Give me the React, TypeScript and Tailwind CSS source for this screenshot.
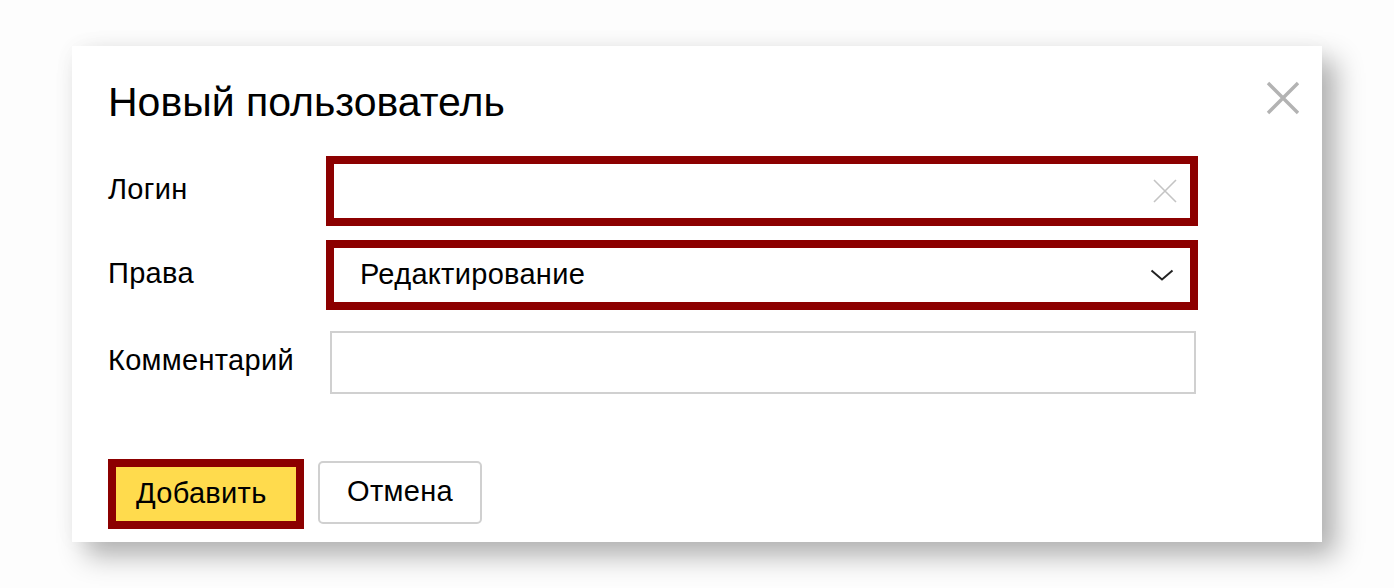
const font = { fontFamily: '"Liberation Sans", Arial, sans-serif' }

const CloseIcon = () => (
  <svg width="34" height="34" viewBox="0 0 34 34" className="text-[#b3b3b3]">
    <path d="M2 2L32 32M32 2L2 32" stroke="currentColor" strokeWidth="3.4" />
  </svg>
)

const ClearIcon = () => (
  <svg width="24" height="24" viewBox="0 0 24 24" className="text-[#c4c4c4]">
    <path d="M1 1L23 23M23 1L1 23" stroke="currentColor" strokeWidth="1.6" />
  </svg>
)

const Chevron = () => (
  <svg width="24" height="13" viewBox="0 0 24 13" className="text-[#222]">
    <path d="M1.5 1.5L12 10.5L22.5 1.5" stroke="currentColor" strokeWidth="2" fill="none" />
  </svg>
)

const Row = ({ label, children }: { label: string; children: React.ReactNode }) => (
  <div className="flex items-center">
    <div className="w-[218px] pb-[5px] text-[29px] tracking-[0.3px] leading-[32px] text-black">{label}</div>
    {children}
  </div>
)

export default function App() {
  return (
    <div className="w-[1394px] h-[588px] bg-[#fdfdfd] pt-[46px] pl-[72px]" style={font}>
      <div className="w-[1250px] h-[496px] bg-white shadow-[14px_14px_26px_rgba(0,0,0,0.3),0_0_24px_rgba(0,0,0,0.03)] pl-[36px] pr-[22px] pt-[32px]">
        <div className="flex items-start justify-between">
          <h1 className="text-[41px] leading-[48px] text-black">Новый пользователь</h1>
          <button className="mt-[3px]">
            <CloseIcon />
          </button>
        </div>

        <div className="mt-[30px] flex flex-col">
          <Row label="Логин">
            <div className="w-[872px] h-[70px] border-[8px] border-[#8c0000] flex items-center justify-end pr-[13px]">
              <ClearIcon />
            </div>
          </Row>

          <div className="mt-[14px]">
            <Row label="Права">
              <div className="w-[872px] h-[70px] border-[8px] border-[#8c0000] flex items-center justify-between pl-[26px] pr-[16px]">
                <span className="text-[29px] tracking-[0.3px] leading-[32px] pb-[2px] text-black">Редактирование</span>
                <Chevron />
              </div>
            </Row>
          </div>

          <div className="mt-[21px]">
            <Row label="Комментарий">
              <div className="ml-[4px] w-[866px] h-[63px] border-2 border-[#d0d0d0] bg-white" />
            </Row>
          </div>
        </div>

        <div className="mt-[65px] flex items-start gap-[14px]">
          <button className="w-[196px] h-[70px] border-[8px] border-[#8c0000] bg-[#ffdb4d] text-left pl-[20px] text-[29px] tracking-[0.3px] leading-[32px] pb-[2px] text-black">
            Добавить
          </button>
          <button className="mt-[2px] w-[164px] h-[63px] border-2 border-[#d0d0d0] rounded-[5px] bg-white text-[29px] tracking-[0.3px] leading-[32px] pb-[4px] text-black">
            Отмена
          </button>
        </div>
      </div>
    </div>
  )
}
